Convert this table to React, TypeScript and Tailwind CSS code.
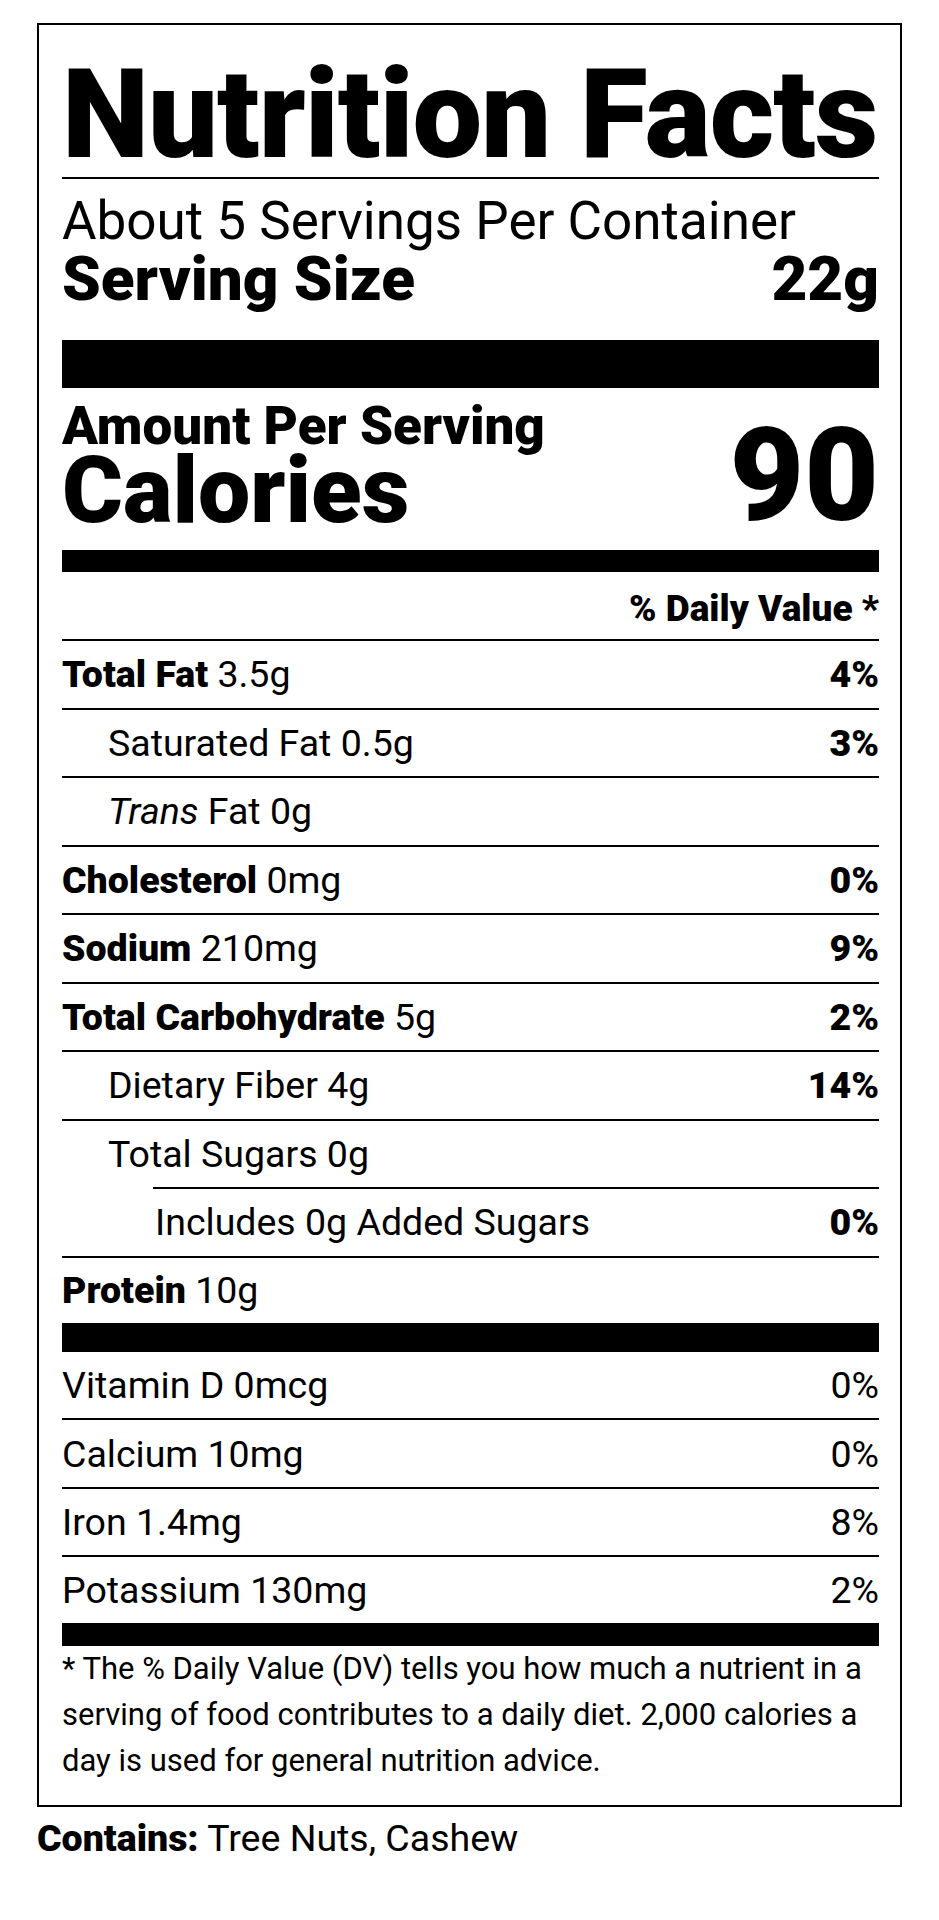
type Row = {
  label: string;
  amount?: string;
  dv?: string;
  bold?: boolean;
  italicPrefix?: string;
  indent?: 0 | 1 | 2;
  lineIndent?: boolean;
};

const nutrients: Row[] = [
  { label: "Total Fat", amount: "3.5g", dv: "4%", bold: true },
  { label: "Saturated Fat", amount: "0.5g", dv: "3%", indent: 1 },
  { label: "Fat", italicPrefix: "Trans", amount: "0g", indent: 1 },
  { label: "Cholesterol", amount: "0mg", dv: "0%", bold: true },
  { label: "Sodium", amount: "210mg", dv: "9%", bold: true },
  { label: "Total Carbohydrate", amount: "5g", dv: "2%", bold: true },
  { label: "Dietary Fiber", amount: "4g", dv: "14%", indent: 1 },
  { label: "Total Sugars", amount: "0g", indent: 1, lineIndent: true },
  { label: "Includes 0g Added Sugars", dv: "0%", indent: 2 },
];

const vitamins = [
  { label: "Vitamin D 0mcg", dv: "0%" },
  { label: "Calcium 10mg", dv: "0%" },
  { label: "Iron 1.4mg", dv: "8%" },
];

function NutrientRow({ row }: { row: Row }) {
  const pad =
    row.indent === 2 ? "pl-[93px]" : row.indent === 1 ? "pl-[46px]" : "pl-0";
  return (
    <>
      <div
        className={`flex h-[66.5px] items-center justify-between pt-[1px] text-[37.5px] leading-none ${pad}`}
      >
        <span>
          {row.italicPrefix && (
            <span className="italic">{row.italicPrefix} </span>
          )}
          {row.bold ? <span className="font-black">{row.label}</span> : row.label}
          {row.amount && <> {row.amount}</>}
        </span>
        {row.dv && <span className="font-black">{row.dv}</span>}
      </div>
      <div className={`h-[2px] bg-black ${row.lineIndent ? "ml-[91px]" : ""}`} />
    </>
  );
}

export default function App() {
  return (
    <div className="min-h-[1920px] bg-white pt-[23px] font-['Roboto',sans-serif] text-black antialiased">
      <div className="mx-[37px] border-2 border-black pr-[21px] pb-[21px] pl-[23px]">
        <h1 className="pt-[28px] text-[124px] leading-none font-black tracking-[-1px]">
          Nutrition Facts
        </h1>
        <div className="h-[2px] bg-black" />

        <p className="mt-[20px] text-[53px] leading-[44px]">
          About 5 Servings Per Container
        </p>
        <div className="mt-[10.5px] flex items-start justify-between text-[62px] leading-[50px] font-black">
          <span>Serving Size</span>
          <span>22g</span>
        </div>

        <div className="mt-[36px] h-[48px] bg-black" />

        <div className="mt-[16px] flex items-start justify-between">
          <div>
            <div className="text-[53px] leading-[44px] font-black">
              Amount Per Serving
            </div>
            <div className="mt-[8px] text-[93px] leading-[70px] font-black">
              Calories
            </div>
          </div>
          <div className="mt-[22px] text-[129px] leading-[100px] font-black">
            90
          </div>
        </div>

        <div className="mt-[24.5px] h-[22px] bg-black" />

        <div className="mt-[17.5px] text-right text-[37px] leading-none font-black">
          % Daily Value *
        </div>
        <div className="mt-[12.5px] h-[2px] bg-black" />

        {nutrients.map((row) => (
          <NutrientRow key={row.label} row={row} />
        ))}

        <div className="flex h-[65px] items-center pt-[2px] text-[37.5px] leading-none">
          <span>
            <span className="font-black">Protein</span> 10g
          </span>
        </div>

        <div className="h-[29px] bg-black" />

        {vitamins.map((v) => (
          <div key={v.label}>
            <div className="flex h-[66.5px] items-center justify-between pt-[2px] text-[37.5px] leading-none">
              <span>{v.label}</span>
              <span>{v.dv}</span>
            </div>
            <div className="h-[2px] bg-black" />
          </div>
        ))}
        <div className="flex h-[65.5px] items-center justify-between pt-[1px] text-[37.5px] leading-none">
          <span>Potassium 130mg</span>
          <span>2%</span>
        </div>

        <div className="h-[23px] bg-black" />

        <div className="text-[31px] leading-[46px]">
          <div>* The % Daily Value (DV) tells you how much a nutrient in a</div>
          <div>serving of food contributes to a daily diet. 2,000 calories a</div>
          <div>day is used for general nutrition advice.</div>
        </div>
      </div>

      <p className="mt-[13.5px] ml-[37px] text-[37.5px] leading-none">
        <span className="font-black">Contains:</span> Tree Nuts, Cashew
      </p>
    </div>
  );
}
